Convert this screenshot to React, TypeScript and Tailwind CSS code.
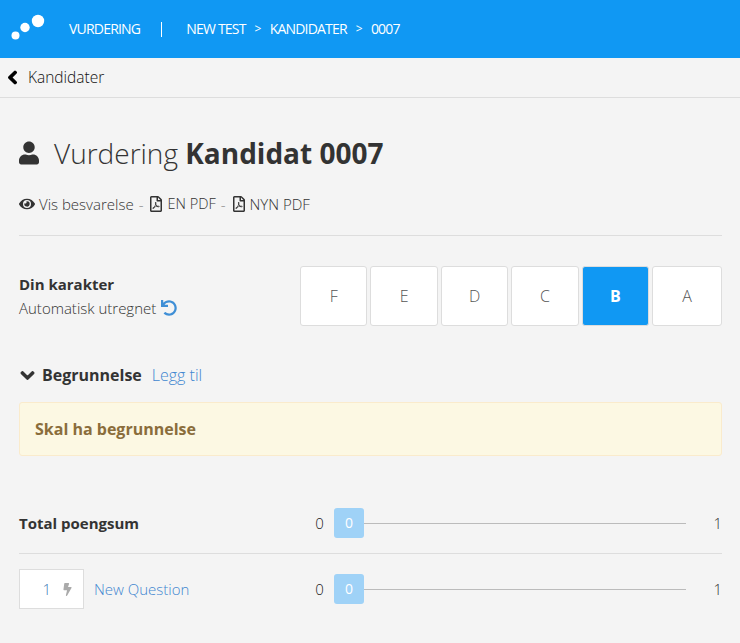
import React from 'react';
import { FaBolt, FaChevronDown, FaChevronLeft, FaEye, FaRegFilePdf, FaUndo, FaUser } from 'react-icons/fa';

const grades = ['F', 'E', 'D', 'C', 'B', 'A'];

const Logo: React.FC = () => (
  <svg width="36" height="30" viewBox="0 0 36 30" className="fill-white">
    <circle cx="6.5" cy="21.5" r="4" />
    <circle cx="16" cy="13.5" r="4.7" />
    <circle cx="29" cy="7" r="6.2" />
  </svg>
);

const ScoreSlider: React.FC = () => (
  <div className="flex items-center w-[408px] text-[15px] font-light text-[#222]">
    <span className="w-[11px] text-center">0</span>
    <span className="ml-[9px] w-[30px] h-[30px] rounded-[3px] bg-[#9fd2f7] text-white font-normal text-sm flex items-center justify-center">0</span>
    <div className="w-[323px] h-px bg-[#bbb]" />
    <span className="ml-[27px] text-[#333]">1</span>
  </div>
);

const App: React.FC = () => {
  return (
    <div className="w-[740px] h-[643px] overflow-hidden bg-[#f4f4f4] text-[#333] font-['Open_Sans',sans-serif]">
      <header className="h-[58px] bg-[#1098f3] text-white flex items-center pl-[9px] text-sm tracking-[-0.8px]">
        <Logo />
        <span className="ml-6">VURDERING</span>
        <span className="ml-[21px] w-px h-[15px] bg-white" />
        <span className="ml-6">NEW TEST</span>
        <span className="mx-[9px] text-xs">&gt;</span>
        <span>KANDIDATER</span>
        <span className="mx-[9px] text-xs">&gt;</span>
        <span>0007</span>
      </header>
      <div className="h-[40px] border-b border-[#ddd] flex items-center pl-[5px] text-[15.5px] font-light text-[#111]">
        <FaChevronLeft className="text-[15px] text-black stroke-[40]" />
        <span className="ml-[8px]">Kandidater</span>
      </div>
      <main className="pl-[19px] pr-[18px]">
        <h1 className="mt-[34px] flex items-center h-[42px] text-[28px] font-light text-[#333]">
          <FaUser className="w-[20px] h-[24px] mr-[15px]" />
          <span>Vurdering <strong className="font-bold">Kandidat 0007</strong></span>
        </h1>
        <div className="mt-[20px] flex items-center text-[15px] font-light h-[20px] text-[#333]">
          <FaEye className="text-[16px] mr-[4px]" />
          <span>Vis besvarelse</span>
          <span className="mx-[5px] text-[#888]">-</span>
          <FaRegFilePdf className="text-[16px] mr-[3px]" />
          <span className="text-[14.5px]">EN PDF</span>
          <span className="mx-[5px] text-[#888]">-</span>
          <FaRegFilePdf className="text-[16px] mr-[3px]" />
          <span>NYN PDF</span>
        </div>
        <div className="mt-[21px] h-px bg-[#ddd]" />
        <section className="mt-[30px] flex items-center justify-between h-[60px]">
          <div>
            <div className="font-bold text-[15px] leading-[24px]">Din karakter</div>
            <div className="flex items-center font-light text-[15px] leading-[24px]">
              Automatisk utregnet
              <FaUndo className="ml-[5px] text-[16px] text-[#3f8fd6]" />
            </div>
          </div>
          <div className="flex gap-[3px]">
            {grades.map((g) => (
              <button
                key={g}
                className={
                  g === 'B'
                    ? 'w-[67.4px] h-[60px] rounded-[3px] border border-[#ddd] bg-[#1098f3] text-white font-bold text-base'
                    : g === 'A'
                      ? 'w-[70px] h-[60px] rounded-[3px] border border-[#ddd] bg-white text-[#555] font-light text-base'
                      : 'w-[67.4px] h-[60px] rounded-[3px] border border-[#ddd] bg-white text-[#555] font-light text-base'
                }
              >
                {g}
              </button>
            ))}
          </div>
        </section>
        <div className="mt-[38px] flex items-center h-[22px]">
          <FaChevronDown className="text-[15px] ml-px stroke-[40]" />
          <strong className="ml-[7px] text-base font-bold">Begrunnelse</strong>
          <span className="ml-[10px] text-[16px] font-light text-[#3f86d0]">Legg til</span>
        </div>
        <div className="mt-[16px] h-[54px] rounded-[3px] border border-[#faebcc] bg-[#fcf8e3] flex items-center pl-[15px] text-[#8a6d3b] text-base font-bold">
          Skal ha begrunnelse
        </div>
        <div className="mt-[52px] h-[30px] flex items-center justify-between">
          <strong className="text-[15px] font-bold">Total poengsum</strong>
          <ScoreSlider />
        </div>
        <div className="mt-[15px] h-px bg-[#ddd]" />
        <div className="mt-[15px] h-[40px] flex items-center justify-between">
          <div className="flex items-center">
            <div className="w-[65px] h-[40px] border border-[#ddd] bg-white flex items-center justify-end pr-[9px] text-[15px] font-light text-[#3f7fb8]">
              1
              <FaBolt className="ml-[10px] text-[13px] text-[#aaa]" />
            </div>
            <span className="ml-[10px] text-[15px] font-light text-[#3f86d0]">New Question</span>
          </div>
          <ScoreSlider />
        </div>
      </main>
    </div>
  );
};

export default App;
